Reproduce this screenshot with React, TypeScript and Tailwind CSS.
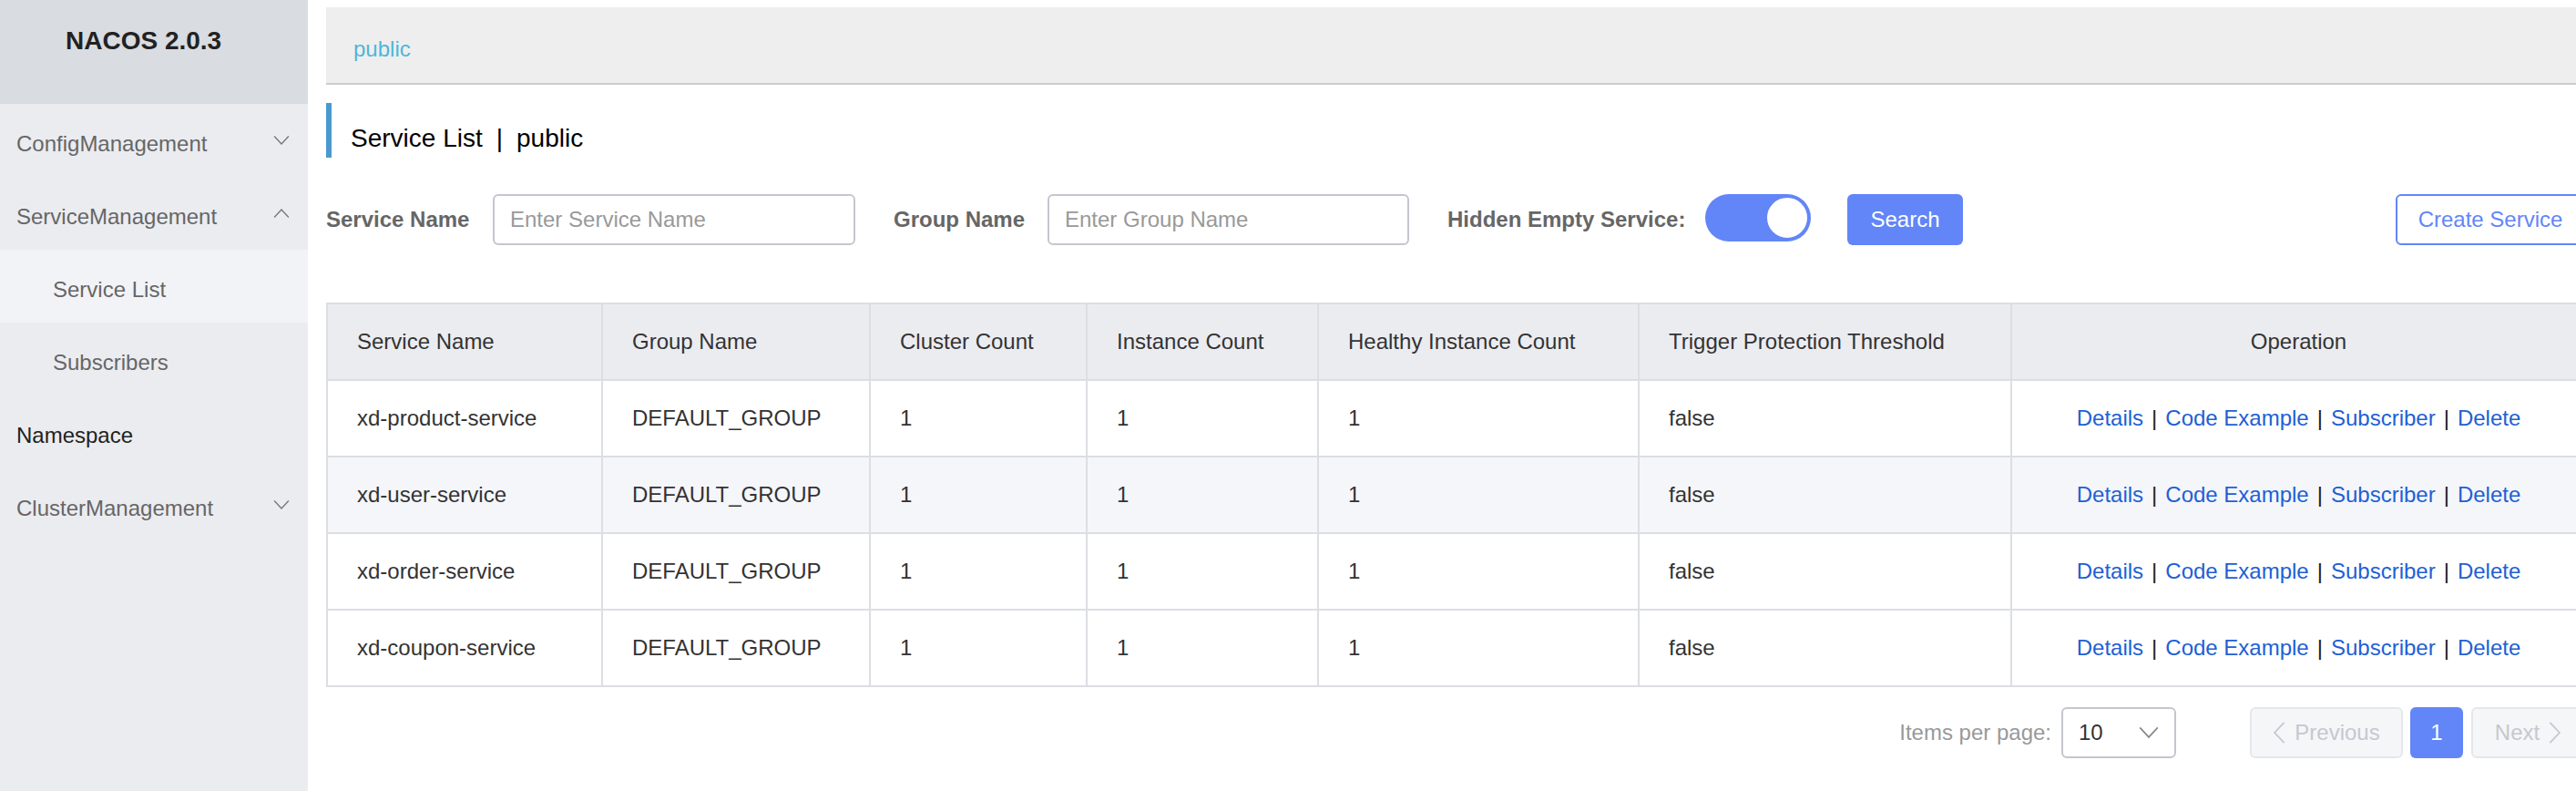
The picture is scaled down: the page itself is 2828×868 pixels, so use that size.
import React from "react";

const rows = [
  "xd-product-service",
  "xd-user-service",
  "xd-order-service",
  "xd-coupon-service",
];

const cols = [
  { label: "Service Name", w: "w-[302px]" },
  { label: "Group Name", w: "w-[294px]" },
  { label: "Cluster Count", w: "w-[238px]" },
  { label: "Instance Count", w: "w-[254px]" },
  { label: "Healthy Instance Count", w: "w-[352px]" },
  { label: "Trigger Protection Threshold", w: "w-[409px]" },
  { label: "Operation", w: "w-[631px]" },
];

const Chevron = ({ up = false, className = "" }: { up?: boolean; className?: string }) => (
  <svg
    viewBox="0 0 16 10"
    className={className}
    fill="none"
    stroke="currentColor"
    strokeWidth="1.2"
  >
    {up ? <path d="M1 9 L8 1.5 L15 9" /> : <path d="M1 1 L8 8.5 L15 1" />}
  </svg>
);

const Side = ({ label, open, dark, sub, active }: { label: string; open?: boolean | null; dark?: boolean; sub?: boolean; active?: boolean }) => (
  <div
    className={`flex h-[80px] items-center pt-[7px] pr-[20px] text-[24px] ${sub ? "pl-[58px]" : "pl-[18px]"} ${
      active ? "bg-[#f2f3f7]" : ""
    } ${dark ? "text-[#222]" : "text-[#666]"}`}
  >
    <span className="flex-1">{label}</span>
    {open === true && <Chevron up className="mb-[8px] h-[12px] w-[18px] text-[#777]" />}
    {open === false && <Chevron className="mb-[8px] h-[12px] w-[18px] text-[#777]" />}
  </div>
);

export default function App() {
  return (
    <div
      className="flex h-[868px] w-[2828px] overflow-hidden bg-white"
      style={{ fontFamily: '"Liberation Sans", Arial, sans-serif' }}
    >
      <aside className="flex w-[338px] shrink-0 flex-col bg-[#ebecf0]">
        <div className="h-[114px] bg-[#d9dce1] pl-[72px] pt-[29px] text-[28px] font-bold leading-[32px] text-[#222]">
          NACOS 2.0.3
        </div>
        <Side label="ConfigManagement" open={false} />
        <Side label="ServiceManagement" open={true} />
        <Side label="Service List" sub active />
        <Side label="Subscribers" sub />
        <Side label="Namespace" dark />
        <Side label="ClusterManagement" open={false} />
      </aside>

      <main className="w-[2520px] shrink-0 px-[20px] pt-[8px]">
        <div className="flex h-[85px] items-center border-b-2 border-[#cccccc] bg-[#eeeeee] pl-[30px] pt-[9px] text-[24px] text-[#4fb6d9]">
          public
        </div>

        <div className="mt-[20px] flex h-[60px] items-start border-l-[6px] border-[#4a9ad0] pl-[21px] pt-[22px] text-[28px] leading-[34px] text-black">
          <span>Service List</span>
          <span className="mx-[15px]">|</span>
          <span>public</span>
        </div>

        <div className="mt-[40px] flex items-start text-[24px]">
          <label className="w-[183px] font-bold leading-[56px] text-[#666]">Service Name</label>
          <input
            placeholder="Enter Service Name"
            className="h-[56px] w-[398px] rounded-[6px] border-2 border-[#c4c6cf] pl-[17px] text-[24px] outline-none placeholder:text-[#999]"
          />
          <label className="ml-[42px] w-[169px] font-bold leading-[56px] text-[#666]">Group Name</label>
          <input
            placeholder="Enter Group Name"
            className="h-[56px] w-[397px] rounded-[6px] border-2 border-[#c4c6cf] pl-[17px] text-[24px] outline-none placeholder:text-[#999]"
          />
          <label className="ml-[42px] w-[283px] font-bold leading-[56px] text-[#666]">Hidden Empty Service:</label>
          <div className="flex h-[52px] w-[116px] items-center justify-end rounded-full bg-[#6286f7] pr-[2px]">
            <div className="h-[48px] w-[48px] rounded-full border-2 border-[#6286f7] bg-white" />
          </div>
          <button className="ml-[40px] h-[56px] w-[127px] rounded-[6px] bg-[#6286f7] text-[24px] text-white">
            Search
          </button>
          <div className="flex-1" />
          <button className="h-[56px] w-[208px] rounded-[6px] border-2 border-[#6286f7] bg-white text-[24px] text-[#6286f7]">
            Create Service
          </button>
        </div>

        <table className="mt-[63px] w-[2480px] table-fixed border-collapse border-2 border-[#dcdee3] text-[24px] text-[#333]">
          <thead>
            <tr className="h-[84px] bg-[#ebecf0]">
              {cols.map((c, i) => (
                <th
                  key={c.label}
                  className={`${c.w} border-2 border-[#dcdee3] px-[32px] font-normal ${
                    i === 6 ? "text-center" : "text-left"
                  }`}
                >
                  {c.label}
                </th>
              ))}
            </tr>
          </thead>
          <tbody>
            {rows.map((name, i) => (
              <tr key={name} className={`h-[84px] ${i === 1 ? "bg-[#f5f6fa]" : "bg-white"}`}>
                <td className="border-2 border-[#dcdee3] px-[32px]">{name}</td>
                <td className="border-2 border-[#dcdee3] px-[32px]">DEFAULT_GROUP</td>
                <td className="border-2 border-[#dcdee3] px-[32px]">1</td>
                <td className="border-2 border-[#dcdee3] px-[32px]">1</td>
                <td className="border-2 border-[#dcdee3] px-[32px]">1</td>
                <td className="border-2 border-[#dcdee3] px-[32px]">false</td>
                <td className="border-2 border-[#dcdee3] px-[32px] text-center">
                  <span className="text-[#2160d4]">Details</span>
                  <span className="mx-[9px] text-[#222]">|</span>
                  <span className="text-[#2160d4]">Code Example</span>
                  <span className="mx-[9px] text-[#222]">|</span>
                  <span className="text-[#2160d4]">Subscriber</span>
                  <span className="mx-[9px] text-[#222]">|</span>
                  <span className="text-[#2160d4]">Delete</span>
                </td>
              </tr>
            ))}
          </tbody>
        </table>

        <div className="mt-[22px] flex items-center justify-end text-[24px]">
          <span className="text-[#999]">Items per page:</span>
          <div className="ml-[11px] flex h-[56px] w-[126px] items-center rounded-[6px] border-2 border-[#c4c6cf] pl-[17px] pr-[16px] text-[#333]">
            <span className="flex-1">10</span>
            <Chevron className="h-[14px] w-[24px] text-[#888]" />
          </div>
          <div className="ml-[81px] flex h-[56px] w-[168px] items-center justify-center gap-[10px] rounded-[6px] border-2 border-[#e6e7eb] bg-[#f5f6f8] text-[#c5c8ce]">
            <svg viewBox="0 0 10 18" className="h-[28px] w-[14px]" fill="none" stroke="currentColor" strokeWidth="1.3">
              <path d="M9 1 L1.5 9 L9 17" />
            </svg>
            <span>Previous</span>
          </div>
          <div className="ml-[8px] flex h-[56px] w-[58px] items-center justify-center rounded-[6px] bg-[#6286f7] text-white">
            1
          </div>
          <div className="ml-[9px] flex h-[56px] w-[125px] items-center justify-center gap-[10px] rounded-[6px] border-2 border-[#e6e7eb] bg-[#f5f6f8] text-[#c5c8ce]">
            <span>Next</span>
            <svg viewBox="0 0 10 18" className="h-[28px] w-[14px]" fill="none" stroke="currentColor" strokeWidth="1.3">
              <path d="M1 1 L8.5 9 L1 17" />
            </svg>
          </div>
        </div>
      </main>
    </div>
  );
}
